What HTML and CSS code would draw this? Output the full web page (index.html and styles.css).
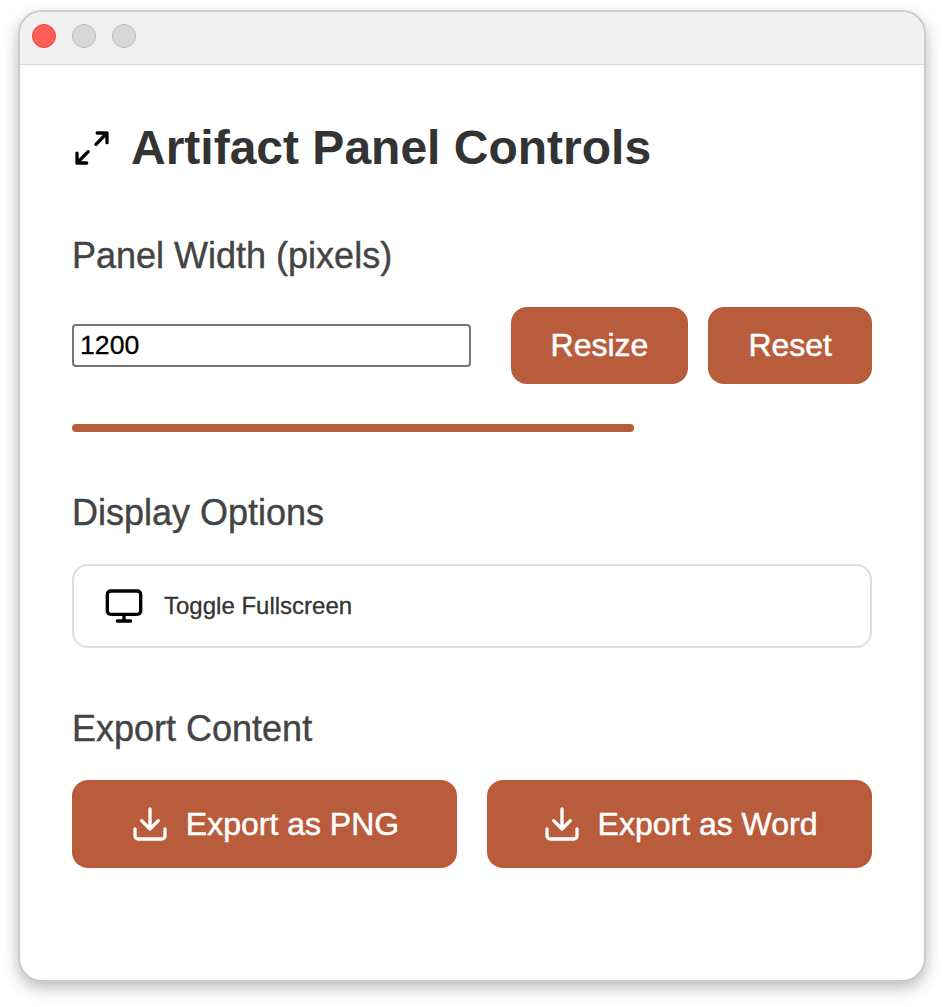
FILE: index.html
```html
<!DOCTYPE html>
<html lang="en">
<head>
<meta charset="utf-8">
<title>Artifact Panel Controls</title>
<link rel="stylesheet" href="styles.css">
</head>
<body>
<div class="window">
  <div class="titlebar">
    <span class="light light-close"></span>
    <span class="light"></span>
    <span class="light"></span>
  </div>
  <main class="content">
    <header class="heading">
      <svg class="icon" viewBox="0 0 24 24"><path d="M15.1 3H21v5.8M8.8 21H3v-5.9M21 3l-6.6 6.8M3 21l6.7-6.8"/></svg>
      <h1 class="title">Artifact Panel Controls</h1>
    </header>
    <section class="section">
      <h2 class="label">Panel Width (pixels)</h2>
      <div class="width-row">
        <input class="width-input" type="text" value="1200" aria-label="Panel width">
        <div class="actions">
          <button class="button">Resize</button>
          <button class="button">Reset</button>
        </div>
      </div>
      <div class="bar"></div>
    </section>
    <section class="section section-display">
      <h2 class="label">Display Options</h2>
      <div class="option">
        <svg class="icon" viewBox="0 0 24 24"><rect x="2" y="3" width="20" height="14" rx="2"/><path d="M8 21h8M12 17v4"/></svg>
        <span class="option-text">Toggle Fullscreen</span>
      </div>
    </section>
    <section class="section section-export">
      <h2 class="label">Export Content</h2>
      <div class="export-grid">
        <button class="button button-export">
          <svg class="icon" viewBox="0 0 24 24"><path d="M21 15v4a2 2 0 0 1-2 2H5a2 2 0 0 1-2-2v-4M7 10l5 5 5-5M12 15V3"/></svg>
          <span>Export as PNG</span>
        </button>
        <button class="button button-export">
          <svg class="icon" viewBox="0 0 24 24"><path d="M21 15v4a2 2 0 0 1-2 2H5a2 2 0 0 1-2-2v-4M7 10l5 5 5-5M12 15V3"/></svg>
          <span>Export as Word</span>
        </button>
      </div>
    </section>
  </main>
</div>
</body>
</html>
```
FILE: styles.css
```css
* { box-sizing: border-box; }

body {
  margin: 0;
  padding: 10px 17px 25px 18px;
  height: 1007px;
  background: #fff;
  font-family: "Liberation Sans", Arial, sans-serif;
  overflow: hidden;
}

.window {
  height: 972px;
  border: 2px solid #ccc;
  border-radius: 24px;
  background: #fff;
  background-clip: padding-box;
  box-shadow: 0 6px 16px rgba(0, 0, 0, 0.27);
  overflow: hidden;
}

.titlebar {
  display: flex;
  gap: 16px;
  height: 53px;
  padding: 12px;
  background: #f1f1f1;
  border-bottom: 1px solid #d6d6d6;
}

.light {
  width: 24px;
  height: 24px;
  border: 1px solid #b8b8b8;
  border-radius: 50%;
  background: #d8d8d8;
}

.light-close {
  background: #ff5f57;
  border-color: #e2463f;
}

.content { padding: 55px 52px 0; }

.heading {
  display: flex;
  align-items: center;
  gap: 20px;
  height: 56px;
}

.icon {
  flex: none;
  width: 40px;
  height: 40px;
  fill: none;
  stroke: #000;
  stroke-width: 2;
  stroke-linecap: round;
  stroke-linejoin: round;
}

.title {
  margin: 0 0 0 -1px;
  font-size: 48px;
  line-height: 56px;
  color: #333;
}

.section { margin-top: 59px; }
.section-display { margin-top: 60px; }
.section-export { margin-top: 60px; }

.label {
  margin: 0;
  font-size: 36px;
  font-weight: 400;
  line-height: 42px;
  color: #444;
  -webkit-text-stroke: 0.4px currentColor;
}

.width-row {
  display: flex;
  align-items: center;
  gap: 40px;
  margin-top: 30px;
}

.width-input {
  flex: 1;
  min-width: 0;
  height: 43px;
  padding: 0 6px;
  border: 2px solid #767676;
  border-radius: 4px;
  font: 26.67px "Liberation Sans", Arial, sans-serif;
  color: #000;
  -webkit-text-stroke: 0.3px currentColor;
}

.actions { display: flex; gap: 20px; }

.button {
  height: 77px;
  padding: 0 40px;
  border: 0;
  border-radius: 16px;
  background: #b85c3c;
  color: #fff;
  font: 32px "Liberation Sans", Arial, sans-serif;
  -webkit-text-stroke: 0.5px currentColor;
}

.bar {
  width: 562px;
  height: 8px;
  margin-top: 40px;
  border-radius: 4px;
  background: #b85c3c;
}

.option {
  display: flex;
  align-items: center;
  gap: 20px;
  height: 84px;
  margin-top: 30px;
  padding: 0 30px;
  border: 2px solid #ddd;
  border-radius: 16px;
}

.option-text {
  font-size: 24px;
  color: #333;
  -webkit-text-stroke: 0.3px currentColor;
}

.export-grid {
  display: grid;
  grid-template-columns: 1fr 1fr;
  gap: 30px;
  margin-top: 30px;
}

.button-export {
  display: flex;
  align-items: center;
  justify-content: center;
  gap: 16px;
  height: 88px;
}

.button-export .icon { stroke: #fff; }
```
